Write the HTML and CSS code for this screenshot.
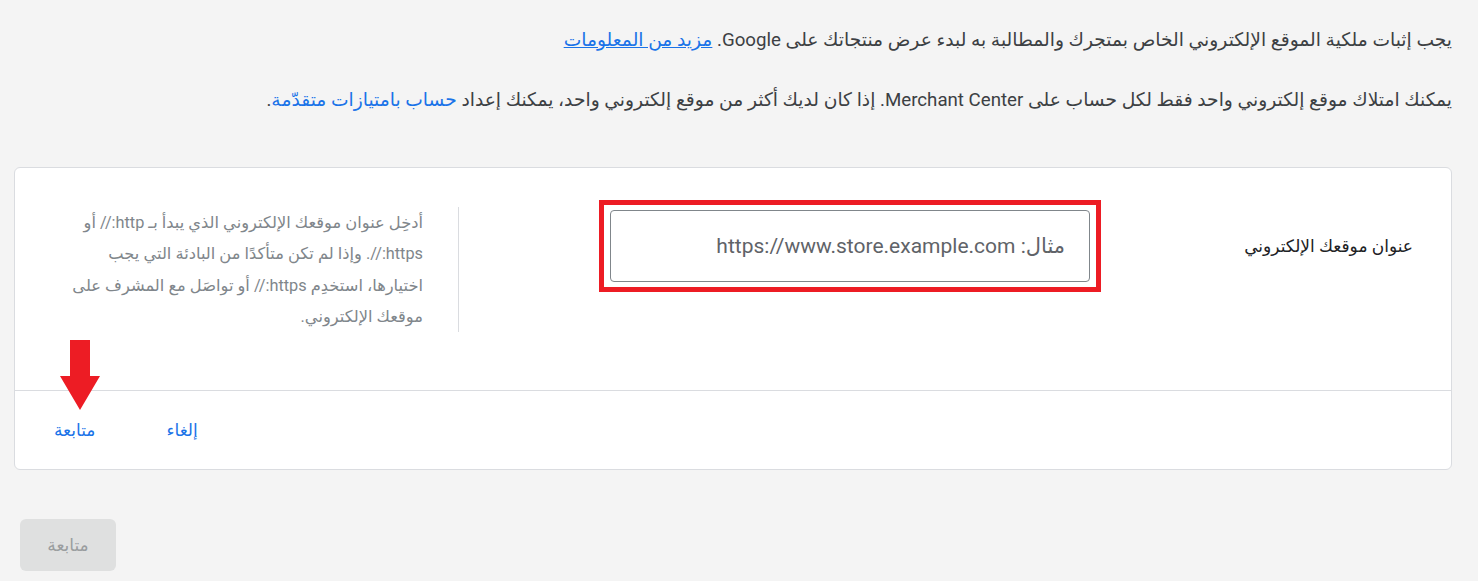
FILE: index.html
```html
<!DOCTYPE html>
<html lang="ar" dir="rtl">
<head>
<meta charset="utf-8">
<link rel="stylesheet" href="styles.css">
</head>
<body>
<main class="page">
  <p class="intro intro-first">يجب إثبات ملكية الموقع الإلكتروني الخاص بمتجرك والمطالبة به لبدء عرض منتجاتك على Google. <a class="link underlined" href="#">مزيد من المعلومات</a></p>
  <p class="intro intro-second">يمكنك امتلاك موقع إلكتروني واحد فقط لكل حساب على Merchant Center. إذا كان لديك أكثر من موقع إلكتروني واحد، يمكنك إعداد <a class="link" href="#">حساب بامتيازات متقدّمة</a>.</p>

  <section class="card">
    <div class="row">
      <div class="field">
        <label class="field-label" for="url">عنوان موقعك الإلكتروني</label>
        <div class="highlight">
          <div class="input" id="url"><span class="placeholder">مثال: https://www.store.example.com</span></div>
        </div>
      </div>
      <div class="help">أدخِل عنوان موقعك الإلكتروني الذي يبدأ بـ http:// أو<br>https://. وإذا لم تكن متأكدًا من البادئة التي يجب<br>اختيارها، استخدِم https:// أو تواصَل مع المشرف على<br>موقعك الإلكتروني.</div>
    </div>
    <div class="actions">
      <button class="text-btn">إلغاء</button>
      <button class="text-btn">متابعة</button>
    </div>
    <svg class="arrow" width="40" height="70" viewBox="0 0 40 70"><polygon points="10,0 30,0 30,36 40,36 20,70 0,36 10,36" fill="#ed1c24"/></svg>
  </section>

  <div class="bottom">
    <button class="disabled-btn">متابعة</button>
  </div>
</main>
</body>
</html>
```

FILE: styles.css
```css
* { box-sizing: border-box; }
html, body { margin: 0; padding: 0; }
body {
  background: #f4f4f4;
  font-family: Roboto, "DejaVu Sans", sans-serif;
  color: #3c4043;
}
.page {
  padding: 0 26px 0 14px;
}
.intro {
  margin: 0;
  font-size: 18.7px;
  line-height: 24px;
  white-space: nowrap;
}
.intro-first { padding-top: 28px; }
.intro-second { margin-top: 36px; }
.link { color: #1a73e8; text-decoration: none; }
.link.underlined { text-decoration: underline; }

.card {
  position: relative;
  margin-top: 55px;
  background: #fff;
  border: 1px solid #dadce0;
  border-radius: 6px;
}
.row {
  display: flex;
  align-items: flex-start;
  padding: 32px 0 58px;
  border-bottom: 1px solid #dadce0;
}
.field {
  display: flex;
  align-items: center;
}
.field-label {
  width: 350px;
  padding-right: 38px;
  font-size: 17px;
  color: #202124;
}
.highlight {
  border: 5px solid #ed1c24;
  padding: 5px 6px;
}
.input {
  width: 480px;
  height: 72px;
  border: 1px solid #80868b;
  border-radius: 4px;
  display: flex;
  align-items: center;
  padding-right: 24px;
}
.placeholder {
  font-size: 21px;
  color: #5f6368;
  white-space: nowrap;
}
.help {
  margin-right: 140px;
  margin-top: 7px;
  width: 384px;
  height: 125px;
  padding-right: 35px;
  border-right: 1px solid #dadce0;
  font-size: 16.3px;
  line-height: 31.3px;
  color: #80868b;
  white-space: nowrap;
}
.actions {
  display: flex;
  justify-content: flex-end;
  align-items: center;
  height: 78px;
  padding-left: 15px;
  gap: 23px;
}
.text-btn {
  background: none;
  border: 0;
  padding: 0 24px;
  font-family: Roboto, "DejaVu Sans", sans-serif;
  font-size: 17px;
  color: #1a73e8;
  cursor: pointer;
}
.arrow {
  position: absolute;
  left: 45px;
  top: 172px;
}
.bottom {
  margin-top: 49px;
  padding-left: 6px;
  display: flex;
  justify-content: flex-end;
}
.disabled-btn {
  width: 96px;
  height: 52px;
  border: 0;
  border-radius: 6px;
  background: #dfe0e0;
  color: #9a9d9f;
  font-family: Roboto, "DejaVu Sans", sans-serif;
  font-size: 17px;
}
```
